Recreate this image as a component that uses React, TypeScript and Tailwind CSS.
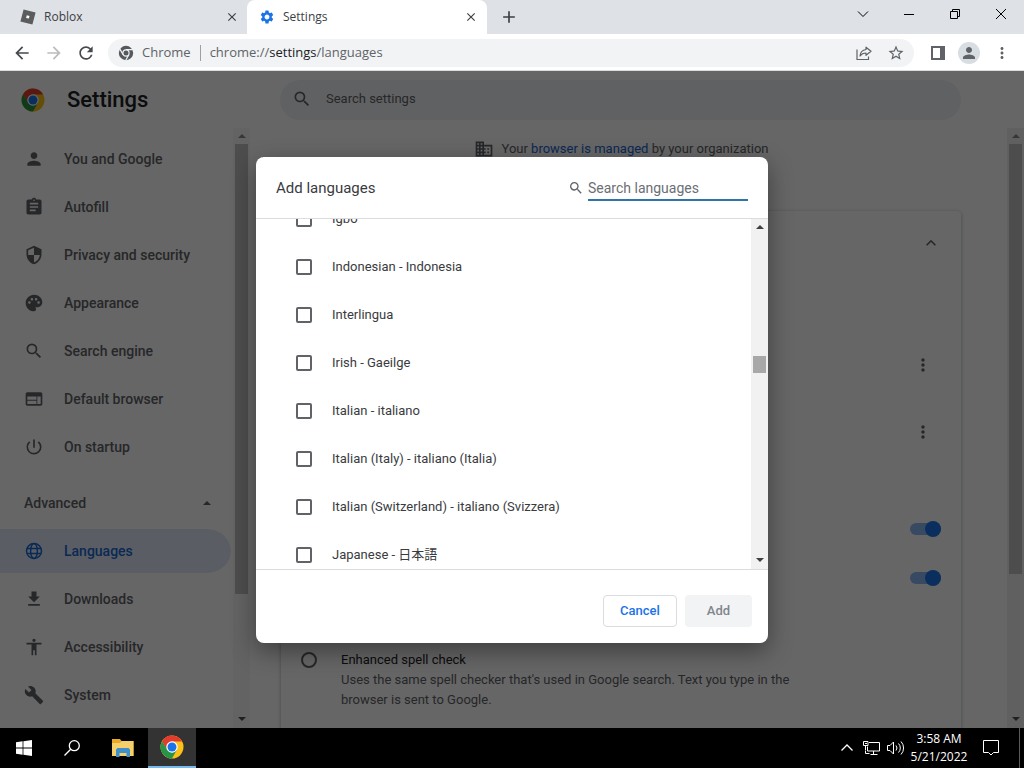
import React from 'react';
import {
  MdAccessibility,
  MdAdd,
  MdArrowBack,
  MdArrowForward,
  MdAssignment,
  MdBuild,
  MdClose,
  MdDomain,
  MdExpandLess,
  MdFileDownload,
  MdMoreVert,
  MdPalette,
  MdPerson,
  MdPowerSettingsNew,
  MdRefresh,
  MdSearch,
  MdSecurity,
  MdSettings,
  MdStarBorder,
  MdWeb,
} from 'react-icons/md';

const menu = [
  { label: 'You and Google', icon: MdPerson },
  { label: 'Autofill', icon: MdAssignment },
  { label: 'Privacy and security', icon: MdSecurity },
  { label: 'Appearance', icon: MdPalette },
  { label: 'Search engine', icon: MdSearch },
  { label: 'Default browser', icon: MdWeb },
  { label: 'On startup', icon: MdPowerSettingsNew },
];

const advancedMenu = [
  { label: 'Languages', icon: GlobeIcon, active: true },
  { label: 'Downloads', icon: MdFileDownload },
  { label: 'Accessibility', icon: MdAccessibility },
  { label: 'System', icon: MdBuild },
];

const languages = [
  'Igbo',
  'Indonesian - Indonesia',
  'Interlingua',
  'Irish - Gaeilge',
  'Italian - italiano',
  'Italian (Italy) - italiano (Italia)',
  'Italian (Switzerland) - italiano (Svizzera)',
  'Japanese - 日本語',
];

function GlobeIcon({ size }: { size: number }) {
  return (
    <svg width={size} height={size} viewBox="0 0 20 20" fill="none" stroke="currentColor" strokeWidth="1.500" aria-hidden="true">
      <circle cx="10" cy="10" r="7.500" />
      <ellipse cx="10" cy="10" rx="3.400" ry="7.500" />
      <path d="M3.300 7.400h13.400M3.300 12.600h13.400" />
    </svg>
  );
}

function ChromeLogo({ size }: { size: number }) {
  return (
    <svg width={size} height={size} viewBox="0 0 48 48" aria-hidden="true">
      <circle cx="24" cy="24" r="23" fill="#fbc116" />
      <path d="M24 13h20a23 23 0 0 0-39.9-.5L14 30z" fill="#e33b2e" />
      <path d="M4.1 12.5A23 23 0 0 0 23.9 47l10-17.3L24 35 14.5 29.5z" fill="#269547" />
      <circle cx="24" cy="24" r="11.5" fill="#fff" />
      <circle cx="24" cy="24" r="9" fill="#1a73e8" />
    </svg>
  );
}

function MonoChromeLogo() {
  return (
    <svg width="16" height="16" viewBox="0 0 48 48" aria-hidden="true">
      <circle cx="24" cy="24" r="21.5" fill="#55585c" />
      <path d="M24 14h20M15.300 29 5.300 11.700M32.700 29 22.700 46.300" stroke="#f1f3f4" strokeWidth="3.500" />
      <circle cx="24" cy="24" r="11" fill="#f1f3f4" />
      <circle cx="24" cy="24" r="7.5" fill="#55585c" />
    </svg>
  );
}

function Triangle({ down }: { down?: boolean }) {
  return (
    <svg width="8" height="4" viewBox="0 0 8 4" fill="currentColor" aria-hidden="true">
      <path d={down ? 'M0 0h8L4 4z' : 'M0 4h8L4 0z'} />
    </svg>
  );
}

function TabStrip() {
  return (
    <div className="flex h-[34px] shrink-0 bg-[#dee1e6] font-['Open_Sans',sans-serif] text-xs text-[#3c4043]">
      <div className="flex w-[247px] items-center pl-5 pr-[7px]">
        <svg width="16" height="16" viewBox="0 0 16 16" className="mr-2" aria-hidden="true">
          <path d="M3.6.5 15.6 3.6 12.4 15.6.4 12.4z" fill="#5b5c5e" />
          <path d="m6.800 6.200 2.700.7-.7 2.700-2.700-.7z" fill="#fff" />
        </svg>
        <span className="flex-1">Roblox</span>
        <button aria-label="Close Roblox tab" className="flex w-4 justify-center">
          <MdClose size={14} />
        </button>
      </div>
      <div className="flex w-60 items-center rounded-t-lg bg-white pl-3 pr-2">
        <MdSettings size={16} className="mr-2 text-[#1a73e8]" />
        <span className="flex-1">Settings</span>
        <button aria-label="Close Settings tab" className="flex w-4 justify-center">
          <MdClose size={14} />
        </button>
      </div>
      <button aria-label="New tab" className="flex w-11 items-center justify-center">
        <MdAdd size={20} />
      </button>
      <div className="ml-auto flex h-7 text-black">
        <button aria-label="Search tabs" className="flex w-[46px] items-center justify-center">
          <svg width="12" height="12" viewBox="0 0 12 12" fill="none" stroke="currentColor">
            <path d="m1 3.500 5 5 5-5" />
          </svg>
        </button>
        <button aria-label="Minimize" className="flex w-[46px] items-center justify-center">
          <svg width="10" height="10" viewBox="0 0 10 10" stroke="currentColor">
            <path d="M0 5.500h10" />
          </svg>
        </button>
        <button aria-label="Restore" className="flex w-[46px] items-center justify-center">
          <svg width="10" height="10" viewBox="0 0 10 10" fill="none" stroke="currentColor">
            <path d="M.5 2.500h7v7h-7zM2.500 2.500v-2h7v7h-2" />
          </svg>
        </button>
        <button aria-label="Close window" className="flex w-[46px] items-center justify-center">
          <svg width="12" height="12" viewBox="0 0 12 12" stroke="currentColor">
            <path d="m1 1 10 10M11 1 1 11" />
          </svg>
        </button>
      </div>
    </div>
  );
}

function Toolbar() {
  return (
    <div className="flex h-[37px] shrink-0 items-center border-b border-[#dadce0] bg-white px-1.5 pt-px text-[#5f6368]">
      <button aria-label="Back" className="flex w-8 justify-center text-[#46494d]">
        <MdArrowBack size={20} />
      </button>
      <button aria-label="Forward" className="flex w-8 justify-center text-[#babcbe]">
        <MdArrowForward size={20} />
      </button>
      <button aria-label="Reload" className="flex w-8 justify-center text-[#46494d]">
        <MdRefresh size={20} />
      </button>
      <div className="ml-1.5 flex h-7 flex-1 items-center rounded-full bg-[#f1f3f4] pl-2.5 pr-0.5 font-['Open_Sans',sans-serif] text-[13px]">
        <MonoChromeLogo />
        <span className="ml-2">Chrome</span>
        <span className="mx-[9px] h-4 w-px bg-[#9aa0a6]" />
        <span className="flex-1">
          chrome://<span className="text-[#202124]">settings</span>/languages
        </span>
        <button aria-label="Share" className="flex w-8 justify-center">
          <svg width="16" height="16" viewBox="0 0 16 16" fill="none" stroke="currentColor" strokeWidth="1.200">
            <path d="M1 4.500v10h11.500v-3" />
            <path d="M10 2.200 15 6.300 10 10.300V8C7.500 8 5.500 8.900 4 11c.3-3.400 2.300-6 6-6.500z" strokeLinejoin="round" />
          </svg>
        </button>
        <button aria-label="Bookmark this tab" className="flex w-8 justify-center">
          <MdStarBorder size={18} />
        </button>
      </div>
      <button aria-label="Side panel" className="ml-2 flex w-8 justify-center">
        <svg width="14" height="14" viewBox="0 0 14 14" aria-hidden="true">
          <path d="M0 0h14v14H0zM2 2v10h7V2z" fill="currentColor" fillRule="evenodd" />
        </svg>
      </button>
      <button aria-label="Profile" className="mx-1 flex size-[22px] items-center justify-center rounded-full bg-[#d8dde2]">
        <MdPerson size={18} />
      </button>
      <button aria-label="Menu" className="ml-0.5 flex w-8 justify-center">
        <MdMoreVert size={18} />
      </button>
    </div>
  );
}

function Sidebar() {
  return (
    <nav className="flex min-h-0 flex-1">
      <div className="flex-1 overflow-hidden pt-[7px] text-sm font-medium text-[#5f6368]">
        {menu.map((item) => (
          <a key={item.label} href="#" className="flex h-12 items-center gap-5 pl-6">
            <item.icon size={20} />
            {item.label}
          </a>
        ))}
        <button className="mt-2 flex h-12 w-full items-center justify-between pl-6 pr-[22px]">
          Advanced
          <Triangle />
        </button>
        {advancedMenu.map((item) => (
          <a
            key={item.label}
            href="#"
            className={`mr-0.5 flex h-12 items-center gap-5 rounded-r-full border-y-2 border-transparent bg-clip-padding pl-6 ${
              item.active ? 'bg-[#e1ebfb] text-[#1967d2]' : ''
            }`}
          >
            <item.icon size={20} />
            {item.label}
          </a>
        ))}
      </div>
      <div className="flex w-[17px] flex-col items-center bg-[#f8f8f8] text-[#505050]">
        <div className="flex h-4 items-center text-[#8a8a8a]">
          <Triangle />
        </div>
        <div className="h-[450px] w-[13px] bg-[#c1c1c1]" />
        <div className="mt-auto flex h-[18px] items-center">
          <Triangle down />
        </div>
      </div>
    </nav>
  );
}

function Toggle({ label }: { label: string }) {
  return (
    <input
      type="checkbox"
      role="switch"
      aria-label={label}
      defaultChecked
      className="relative mr-5 h-3 w-[31px] appearance-none rounded-full bg-[#8db9f4] after:absolute after:right-0 after:-top-0.5 after:size-4 after:rounded-full after:bg-[#1a73e8]"
    />
  );
}

function SettingsMain() {
  return (
    <main className="flex min-h-0 flex-1">
      <div className="flex min-w-0 flex-1 flex-col overflow-hidden pl-[31px] pr-[46px] text-[13px] text-[#5f6368]">
        <p className="flex h-[42px] items-center justify-center gap-2">
          <MdDomain size={20} />
          <span>
            Your <a href="#" className="text-[#1967d2]">browser is managed</a> by your organization
          </span>
        </p>
        <section className="mt-[41px] flex-1 rounded-t bg-white shadow-[0_1px_3px_1px_rgba(60,64,67,0.25)]">
          <div className="flex h-16 items-center justify-end pr-5">
            <button aria-label="Collapse languages">
              <MdExpandLess size={20} />
            </button>
          </div>
          <div className="mt-14 flex h-[67px] items-center justify-end pr-7">
            <button aria-label="More actions">
              <MdMoreVert size={20} />
            </button>
          </div>
          <div className="flex h-[67px] items-center justify-end pr-7">
            <button aria-label="More actions">
              <MdMoreVert size={20} />
            </button>
          </div>
          <div className="mt-10 flex h-12 items-center justify-end">
            <Toggle label="Offer to translate pages" />
          </div>
          <div className="flex h-[49px] items-center justify-end">
            <Toggle label="Spell check" />
          </div>
          <label className="mt-12 flex items-start gap-6 pl-5 leading-5">
            <input
              type="radio"
              name="spellcheck"
              className="mt-0.5 size-4 shrink-0 appearance-none rounded-full border-2 border-[#5f6368]"
            />
            <span className="block max-w-[480px]">
              <span className="block text-[#202124]">Enhanced spell check</span>
              Uses the same spell checker that's used in Google search. Text you type in the browser is sent to Google.
            </span>
          </label>
        </section>
      </div>
      <div className="flex w-[17px] flex-col items-center bg-[#f1f1f1] text-[#505050]">
        <div className="flex h-4 items-center text-[#8a8a8a]">
          <Triangle />
        </div>
        <div className="h-[430px] w-[13px] bg-[#c1c1c1]" />
        <div className="mt-auto flex h-[18px] items-center">
          <Triangle down />
        </div>
      </div>
    </main>
  );
}

function AddLanguagesDialog() {
  return (
    <div
      role="dialog"
      aria-label="Add languages"
      className="w-[512px] overflow-hidden rounded-lg bg-white text-[13px] text-[#3a3b3e] shadow-[0_8px_24px_rgba(0,0,0,0.4)]"
    >
      <div className="flex h-[62px] items-center border-b border-[#dadce0] px-5 pt-0.5">
        <h2 className="flex-1 text-[15px]">Add languages</h2>
        <MdSearch size={16} className="mr-1 text-[#5f6368]" />
        <input
          type="search"
          aria-label="Search languages"
          placeholder="Search languages"
          className="h-[26px] w-40 border-b-2 border-[#2f74a8] pt-0.5 text-sm outline-none placeholder:text-[#6b6f74]"
        />
      </div>
      <div className="flex h-[350px] overflow-hidden">
        <div className="-mt-6 flex-1">
          {languages.map((language) => (
            <label key={language} className="flex h-12 items-center gap-5 pl-10">
              <input
                type="checkbox"
                className="size-4 appearance-none rounded-[2px] border-2 border-[#5f6368]"
              />
              {language}
            </label>
          ))}
        </div>
        <div className="flex w-[17px] flex-col items-center bg-[#f1f1f1] text-[#404040]">
          <div className="flex h-[17px] items-center">
            <Triangle />
          </div>
          <div className="mt-[120px] h-[17px] w-[13px] bg-[#a8a8a8]" />
          <div className="mt-auto flex h-[17px] items-center">
            <Triangle down />
          </div>
        </div>
      </div>
      <div className="flex justify-end gap-2 border-t border-[#dadce0] px-4 pb-4 pt-[25px] font-medium">
        <button className="h-8 w-[74px] rounded border border-[#dadce0] text-[#1a73e8]">Cancel</button>
        <button disabled className="h-8 w-[67px] rounded bg-[#f1f3f4] text-[#80868b]">
          Add
        </button>
      </div>
    </div>
  );
}

function Taskbar() {
  return (
    <footer className="flex h-10 shrink-0 items-center bg-black font-['Open_Sans',sans-serif] text-xs text-white">
      <button aria-label="Start" className="flex w-12 justify-center">
        <svg width="16" height="16" viewBox="0 0 16 16" fill="currentColor">
          <path d="M0 2.200 6.600 1.300v6.300H0zM7.400 1.200 16 0v7.600H7.400zM0 8.400h6.600v6.300L0 13.800zM7.400 8.400H16V16l-8.600-1.200z" />
        </svg>
      </button>
      <button aria-label="Search" className="flex w-12 justify-center">
        <svg width="16" height="16" viewBox="0 0 16 16" fill="none" stroke="currentColor" strokeWidth="1.300">
          <circle cx="10.300" cy="5.700" r="5" />
          <path d="M6.700 9.300.5 15.500" />
        </svg>
      </button>
      <button aria-label="File Explorer" className="ml-0.5 flex w-[50px] justify-center">
        <svg width="22" height="18" viewBox="0 0 22 18">
          <path d="M0 0h8l1.500 2H21.500v15H0z" fill="#e9a825" />
          <path d="M0 4h8l2-2h11.500v15H0z" fill="#f5cf6b" />
          <path d="M4 10.500 5.500 9h11l1.500 1.500V18h-3.500v-4h-7v4H4z" fill="#3f8fcb" />
        </svg>
      </button>
      <button aria-label="Google Chrome" className="flex h-10 w-12 items-center justify-center border-b-2 border-[#76b9ed] bg-[#333]">
        <ChromeLogo size={24} />
      </button>
      <div className="ml-auto flex items-center">
        <button aria-label="Show hidden icons" className="flex w-6 justify-center">
          <svg width="14" height="14" viewBox="0 0 14 14" fill="none" stroke="currentColor" strokeWidth="1.300">
            <path d="m1.500 9.500 5.500-5.500 5.500 5.500" />
          </svg>
        </button>
        <button aria-label="Network" className="flex w-6 justify-center">
          <svg width="17" height="16" viewBox="0 0 17 16" fill="none" stroke="currentColor">
            <path d="M6 2.500h10.500v8.500h-12V6.500M.5 1.500h4.500v4H.5zM2.500 5.500v5M7.500 14.500h7M10.500 11v3.500M2.500 11v2.500h4M2 3.500h2" />
          </svg>
        </button>
        <button aria-label="Volume" className="flex w-6 justify-center">
          <svg width="17" height="16" viewBox="0 0 17 16" fill="none" stroke="currentColor">
            <path d="M.5 5.500h2.500L6.500 2v12L3 10.500H.5zM9 5.500a4 4 0 0 1 0 5M11.500 3.500a6.500 6.500 0 0 1 0 9M14 1.500a9.500 9.500 0 0 1 0 13" />
          </svg>
        </button>
        <div className="w-16 text-center leading-[18px]">
          3:58 AM
          <br />
          5/21/2022
        </div>
        <button aria-label="Notifications" className="flex w-10 justify-center">
          <svg width="16" height="16" viewBox="0 0 16 16" fill="none" stroke="currentColor">
            <path d="M.5.500h15v12h-5L8 15l-2.500-2.500h-5z" />
          </svg>
        </button>
        <span className="ml-2 mr-1 h-10 w-px bg-[#5a5a5a]" />
      </div>
    </footer>
  );
}

export default function App() {
  return (
    <div className="flex h-screen flex-col overflow-hidden bg-white font-[Roboto,'Noto_Sans_CJK_JP',sans-serif]">
      <TabStrip />
      <Toolbar />
      <div className="relative flex min-h-0 flex-1 flex-col">
        <header className="flex h-[57px] shrink-0 items-center pr-[63px]">
          <div className="flex w-[280px] items-center gap-[22px] pl-[21px]">
            <ChromeLogo size={24} />
            <h1 className="text-[22px] font-medium text-[#202124]">Settings</h1>
          </div>
          <label className="flex h-10 flex-1 items-center gap-3.5 rounded-full bg-[#f1f3f4] pb-0.5 pl-3 text-[#5f6368]">
            <MdSearch size={20} />
            <input
              type="search"
              aria-label="Search settings"
              placeholder="Search settings"
              className="flex-1 text-[13px] placeholder:text-[#5f6368]"
            />
          </label>
        </header>
        <div className="flex min-h-0 flex-1">
          <div className="flex w-[250px] shrink-0">
            <Sidebar />
          </div>
          <SettingsMain />
        </div>
        <div className="absolute inset-0 flex items-center justify-center bg-black/60">
          <AddLanguagesDialog />
        </div>
      </div>
      <Taskbar />
    </div>
  );
}
